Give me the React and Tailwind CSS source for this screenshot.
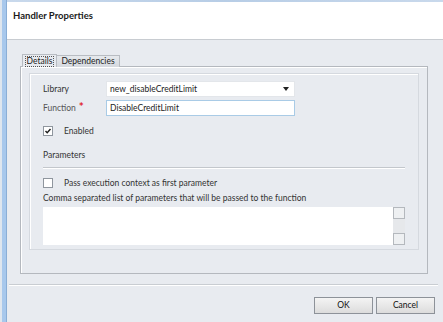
import React from 'react';

const font = { fontFamily: 'Lato, "Noto Sans", sans-serif' };

const Checkbox = ({ checked }) => (
  <div className="w-[10px] h-[10px] border border-[#8f969e] bg-white flex items-center justify-center shrink-0">
    {checked && (
      <svg width="8" height="8" viewBox="0 0 8 8">
        <path d="M1.5 4 L3.2 5.8 L6.5 2" stroke="#1e1e1e" strokeWidth="1.4" fill="none" />
      </svg>
    )}
  </div>
);

const Details = () => (
  <div className="mx-[8px] mt-[6px] h-[177px] border border-[#d5d9df] shadow-[inset_1px_1px_0_#ffffff] pl-[13px] pr-[13px] pt-[7px] text-[8.5px] text-[#333]">
    <div className="flex items-center h-[16px]">
      <div className="w-[63px]">Library</div>
      <div className="w-[189px] h-[16px] bg-white border border-[#e3e6ea] flex items-center justify-between px-[3px]">
        <span className="text-[#222]">new_disableCreditLimit</span>
        <svg width="6" height="4" viewBox="0 0 6 4" className="mr-[2px]">
          <path d="M0 0 H6 L3 4 Z" fill="#222" />
        </svg>
      </div>
    </div>
    <div className="flex items-center h-[16px] mt-[3px]">
      <div className="w-[63px] text-[#555] flex items-start">
        Function
        <span className="ml-[3px] text-[#e0242b] text-[12px] font-bold leading-[10px]">*</span>
      </div>
      <div className="w-[189px] h-[16px] bg-white border border-[#a9cbe6] flex items-center px-[3px] text-[#222]">
        DisableCreditLimit
      </div>
    </div>
    <div className="flex items-center mt-[9px] h-[12px]">
      <Checkbox checked />
      <span className="ml-[11px]">Enabled</span>
    </div>
    <div className="mt-[12px] h-[12px] flex items-center">Parameters</div>
    <div className="mt-[6px] border-t border-[#c3c7cc] shadow-[0_1px_0_#ffffff]" />
    <div className="flex items-center mt-[9px] h-[12px]">
      <Checkbox />
      <span className="ml-[11px]">Pass execution context as first parameter</span>
    </div>
    <div className="mt-[3px] h-[12px] flex items-center">
      Comma separated list of parameters that will be passed to the function
    </div>
    <div className="mt-[3px] h-[38px] bg-white flex justify-end">
      <div className="w-[12px] bg-[#e6e8eb] flex flex-col justify-between">
        <div className="h-[12px] border border-[#b4b8bd] bg-[#eef0f2]" />
        <div className="h-[12px] border border-[#b4b8bd] bg-[#eef0f2]" />
      </div>
    </div>
  </div>
);

export default function App() {
  return (
    <div className="w-[443px] h-[322px] bg-[#e8ebf0] flex overflow-hidden" style={font}>
      {/* window edge */}
      <div className="w-[7px] flex shrink-0">
        <div className="w-[2px] bg-[#dfe6ee]" />
        <div className="w-[4px] bg-[#a8c8ec]" />
        <div className="w-[1px] bg-[#8aaed6]" />
      </div>

      <div className="flex-1 flex flex-col">
        <div className="h-[2px] bg-gradient-to-r from-[#c9d9ec] via-[#b7cde6] to-[#c9d9ec]" />
        {/* header */}
        <div className="h-[38px] bg-white border-b border-[#c8ccd1] pl-[6px] pt-[7px]">
          <div className="text-[9.5px] font-bold text-[#1b1b1b]">Handler Properties</div>
        </div>

        {/* body */}
        <div className="h-[244px] flex flex-col">
          <div className="pl-[13px] pr-[15px] pt-[14px]">
            {/* tabs */}
            <div className="flex items-end h-[13px] pl-[2px]">
              <div className="h-[13px] w-[35px] bg-[#e8ebf0] border border-b-0 border-[#b8bcc2] flex items-center justify-center text-[8.5px] text-[#222] relative z-10">
                <span className="outline outline-1 outline-dotted outline-[#555] px-[1px] leading-[9px]">Details</span>
              </div>
              <div className="h-[12px] w-[63px] bg-gradient-to-b from-[#e6e9ed] to-[#d5d9df] border border-b-0 border-l-0 border-[#b8bcc2] flex items-center justify-center text-[8.5px] text-[#222]">
                Dependencies
              </div>
            </div>
            {/* panel */}
            <div className="-mt-[1px] h-[208px] border border-[#b4b8be] shadow-[inset_1px_1px_0_#ffffff]">
              <Details />
            </div>
          </div>

          <div className="mt-[10px] ml-[2px] mr-[5px] border-t border-[#c9cdd2] shadow-[0_1px_0_#ffffff]" />

          <div className="flex justify-end gap-[3px] pr-[8px] mt-[12px]">
            <button className="w-[59px] h-[17px] border border-[#8d9299] bg-gradient-to-b from-[#f4f4f4] to-[#dcdcdc] text-[8.5px] text-[#111] flex items-center justify-center">
              OK
            </button>
            <button className="w-[59px] h-[17px] border border-[#8d9299] bg-gradient-to-b from-[#f4f4f4] to-[#dcdcdc] text-[8.5px] text-[#111] flex items-center justify-center">
              Cancel
            </button>
          </div>
        </div>
      </div>
    </div>
  );
}
